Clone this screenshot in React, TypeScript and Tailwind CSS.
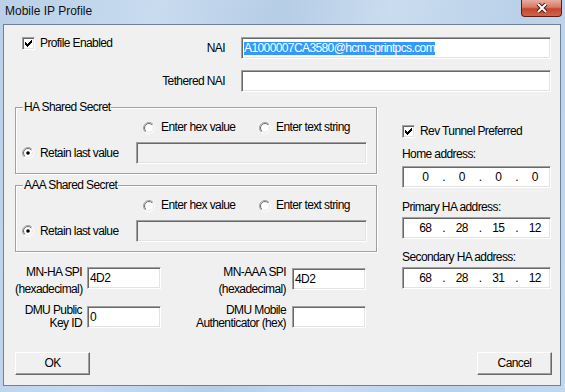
import React from "react";

// classic win32 sunken edit border
const sunken =
  "border border-t-[#a0a0a0] border-l-[#a0a0a0] border-r-white border-b-white shadow-[inset_1px_1px_0_#696969,inset_-1px_-1px_0_#e3e3e3]";
const raised =
  "border border-t-white border-l-white border-r-[#696969] border-b-[#696969] shadow-[inset_-1px_-1px_0_#a0a0a0]";

function CheckBox() {
  const tops = [2, 3, 4, 3, 2, 1, 0];
  return (
    <div className={`w-[13px] h-[13px] shrink-0 bg-white ${sunken} flex items-center justify-center`}>
      <svg width="7" height="7" viewBox="0 0 7 7" shapeRendering="crispEdges">
        {tops.map((t, i) => (
          <rect key={i} x={i} y={t} width="1" height="3" fill="#000" />
        ))}
      </svg>
    </div>
  );
}

function Radio({ checked = false }: { checked?: boolean }) {
  return (
    <svg width="12" height="12" viewBox="0 0 12 12" className="shrink-0">
      <defs>
        <linearGradient id="rdo" x1="0" y1="0" x2="1" y2="1">
          <stop offset="0.5" stopColor="#a0a0a0" />
          <stop offset="0.5" stopColor="#ffffff" />
        </linearGradient>
        <linearGradient id="rdi" x1="0" y1="0" x2="1" y2="1">
          <stop offset="0.5" stopColor="#696969" />
          <stop offset="0.5" stopColor="#e3e3e3" />
        </linearGradient>
      </defs>
      <circle cx="6" cy="6" r="5.5" fill="#fff" stroke="url(#rdo)" />
      <circle cx="6" cy="6" r="4.5" fill="#fff" stroke="url(#rdi)" />
      {checked && <circle cx="6" cy="6" r="1.8" fill="#000" />}
    </svg>
  );
}

function IpBox({ parts }: { parts: string[] }) {
  return (
    <div className={`w-[149px] h-[22px] bg-white ${sunken} flex items-center pl-[7px]`}>
      {parts.map((p, i) => (
        <React.Fragment key={i}>
          {i > 0 && <span className="w-[6px] text-center">.</span>}
          <span className="w-[31px] text-center">{p}</span>
        </React.Fragment>
      ))}
    </div>
  );
}

function SecretGroup({ title }: { title: string }) {
  return (
    <fieldset className="border border-[#a0a0a0] shadow-[1px_1px_0_#fff,inset_1px_1px_0_#fff] pb-[9px]">
      <legend className="ml-[7px] px-px leading-[15px] bg-[#f0f0f0]">{title}</legend>
      <div className="mt-[5px] flex items-center h-[15px] whitespace-nowrap">
        <div className="ml-[127px] w-[116px] flex items-center gap-[6px]">
          <Radio />
          <span>Enter hex value</span>
        </div>
        <div className="flex items-center gap-[5px]">
          <Radio />
          <span>Enter text string</span>
        </div>
      </div>
      <div className="mt-[7px] flex items-center h-[22px] whitespace-nowrap">
        <div className="ml-[6px] w-[114px] flex items-center gap-[6px]">
          <Radio checked />
          <span>Retain last value</span>
        </div>
        <div className={`w-[231px] h-[22px] bg-[#f0f0f0] ${sunken}`} />
      </div>
    </fieldset>
  );
}

function Edit({ value, className = "" }: { value?: string; className?: string }) {
  return (
    <div className={`w-[74px] h-[22px] shrink-0 bg-white ${sunken} flex items-center pl-[2px] ${className}`}>
      {value}
    </div>
  );
}

export default function App() {
  return (
    <div className="w-[565px] h-[392px] flex flex-col bg-[linear-gradient(100deg,#b9d0e8_0%,#c8dbef_25%,#b6cde6_45%,#cadcef_62%,#bad1e9_82%,#c4d8ed_100%)] text-black text-[12px] tracking-[-0.6px] leading-[15px] font-['Liberation_Sans',Arial,sans-serif]">
      {/* title bar */}
      <div className="h-[24px] flex items-start shrink-0">
        <span className="ml-[5px] mt-[4px] text-[12px] tracking-normal leading-[15px] text-[#111]">
          Mobile IP Profile
        </span>
        <div className="ml-auto mr-[3px] w-[41px] h-[17px] rounded-b-[4px] border border-t-0 border-[#5a1f14] bg-[linear-gradient(to_bottom,#e9ad9f_0%,#d77a64_45%,#c7452b_55%,#d0644a_100%)] flex items-center justify-center">
          <svg width="12" height="10" viewBox="0 0 12 10">
            <path d="M2 1 L10 9 M10 1 L2 9" stroke="#4a1a12" strokeWidth="4" />
            <path d="M2 1 L10 9 M10 1 L2 9" stroke="#fff" strokeWidth="2" />
          </svg>
        </div>
      </div>

      <div className="flex flex-1">
        <div className="w-[3px]" />
        {/* client area */}
        <div className="w-[558px] h-[362px] border border-[#6e8196] bg-[#f0f0f0] flex flex-col whitespace-nowrap">
          {/* NAI */}
          <div className="mt-[12px] flex h-[22px]">
            <div className="w-[221px] flex">
              <div className="ml-[18px] -mt-px self-start flex items-center gap-[5px]">
                <CheckBox />
                <span>Profile Enabled</span>
              </div>
              <span className="ml-auto self-center">NAI</span>
            </div>
            <div className={`ml-[16px] w-[310px] h-[22px] bg-white ${sunken} flex items-center pl-[2px]`}>
              <span className="bg-[#3399ff] text-white leading-[13px]">A1000007CA3580@hcm.sprintpcs.com</span>
            </div>
          </div>

          {/* Tethered NAI */}
          <div className="mt-[11px] flex h-[22px]">
            <div className="w-[221px] flex items-center justify-end">Tethered NAI</div>
            <div className={`ml-[16px] w-[310px] h-[22px] bg-white ${sunken}`} />
          </div>

          {/* middle section */}
          <div className="mt-[8px] flex pl-[11px]">
            <div className="w-[362px] flex flex-col">
              <SecretGroup title="HA Shared Secret" />
              <div className="mt-[4px]">
                <SecretGroup title="AAA Shared Secret" />
              </div>

              <div className="mt-[12px] flex items-start">
                <div className="w-[67px] text-right leading-[17px]">
                  MN-HA SPI
                  <br />
                  (hexadecimal)
                </div>
                <Edit value="4D2" className="ml-[5px] mt-[3px]" />
                <div className="w-[125px] text-right leading-[17px]">
                  MN-AAA SPI
                  <br />
                  (hexadecimal)
                </div>
                <Edit value="4D2" className="ml-[6px] mt-[4px]" />
              </div>

              <div className="mt-[6px] flex items-start">
                <div className="w-[67px] text-right leading-[13px]">
                  DMU Public
                  <br />
                  Key ID
                </div>
                <Edit value="0" className="ml-[5px] mt-[2px]" />
                <div className="w-[125px] text-right leading-[13px]">
                  DMU Mobile
                  <br />
                  Authenticator (hex)
                </div>
                <Edit className="ml-[6px] mt-[2px]" />
              </div>
            </div>

            <div className="ml-[25px] w-[149px] flex flex-col">
              <div className="mt-[24px] flex items-center gap-[5px] h-[15px]">
                <CheckBox />
                <span>Rev Tunnel Preferred</span>
              </div>
              <div className="mt-[8px]">Home address:</div>
              <div className="mt-[4px]">
                <IpBox parts={["0", "0", "0", "0"]} />
              </div>
              <div className="mt-[12px]">Primary HA address:</div>
              <div className="mt-[2px]">
                <IpBox parts={["68", "28", "15", "12"]} />
              </div>
              <div className="mt-[11px]">Secondary HA address:</div>
              <div className="mt-[2px]">
                <IpBox parts={["68", "28", "31", "12"]} />
              </div>
            </div>
          </div>

          {/* buttons */}
          <div className="mt-[22px] flex">
            <button className={`ml-[11px] w-[75px] h-[23px] bg-[#f0f0f0] ${raised}`}>OK</button>
            <button className={`ml-auto mr-[8px] w-[75px] h-[23px] bg-[#f0f0f0] ${raised}`}>Cancel</button>
          </div>
        </div>
        <div className="w-[4px]" />
      </div>
      <div className="h-[6px] shrink-0" />
    </div>
  );
}
